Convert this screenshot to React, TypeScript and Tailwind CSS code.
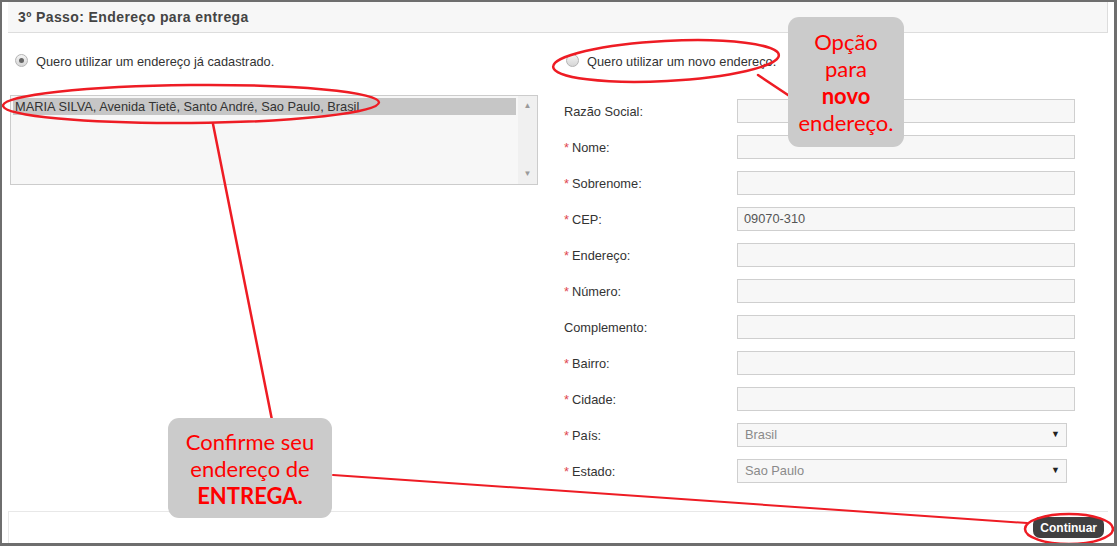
import React from 'react';

const FIELDS = [
  { label: 'Razão Social:', required: false },
  { label: 'Nome:', required: true },
  { label: 'Sobrenome:', required: true },
  { label: 'CEP:', required: true, value: '09070-310' },
  { label: 'Endereço:', required: true },
  { label: 'Número:', required: true },
  { label: 'Complemento:', required: false },
  { label: 'Bairro:', required: true },
  { label: 'Cidade:', required: true },
];

const SELECTS = [
  { label: 'País:', value: 'Brasil' },
  { label: 'Estado:', value: 'Sao Paulo' },
];

function Radio({ checked }: { checked?: boolean }) {
  return (
    <span className="mt-[1px] flex h-[13px] w-[13px] flex-shrink-0 items-center justify-center rounded-full border border-[#b4b4b4] bg-gradient-to-b from-[#f4f4f4] to-[#d6d6d6]">
      {checked && <span className="h-[5px] w-[5px] rounded-full bg-[#666]" />}
    </span>
  );
}

function Label({ text, required }: { text: string; required?: boolean }) {
  return (
    <div className="w-[173px] flex-shrink-0 pt-[2px] text-[12.8px] text-[#333]">
      {required && <span className="mr-[3px] text-[#e0464e]">*</span>}
      {text}
    </div>
  );
}

export default function App() {
  return (
    <div className="relative flex h-[546px] w-[1117px] flex-col overflow-hidden border-b-[3px] border-l-2 border-r-[3px] border-t-2 border-[#6e6e6e] bg-white font-['Liberation_Sans',Arial,sans-serif] text-[12.8px] text-[#333]">
      {/* header */}
      <div className="mx-[6px] flex h-[31px] flex-shrink-0 items-center border-b border-r border-[#dddddd] bg-[#f7f7f7] pl-[10px] text-[14px] font-bold tracking-[0.4px] text-[#444]">
        3º Passo: Endereço para entrega
      </div>

      {/* content */}
      <div className="flex flex-1">
        {/* left */}
        <div className="ml-[7px] w-[529px] flex-shrink-0 pt-[20px]">
          <div className="flex h-[18px] items-start pl-[6px]">
            <Radio checked />
            <span className="ml-[8px] leading-[18px]">Quero utilizar um endereço já cadastrado.</span>
          </div>
          <div className="ml-[1px] mt-[24px] flex h-[90px] w-[528px] border border-[#cccccc] bg-[#f7f7f7]">
            <div className="flex-1 p-[2px]">
              <div className="flex h-[17px] items-center bg-[#c6c6c6] pl-[2px] text-[12.8px] text-[#333]">
                MARIA SILVA, Avenida Tietê, Santo André, Sao Paulo, Brasil
              </div>
            </div>
            <div className="flex w-[19px] flex-col items-center justify-between bg-[#f0f0f0] py-[4px] text-[8px] text-[#9a9a9a]">
              <span>▲</span>
              <span>▼</span>
            </div>
          </div>
        </div>

        {/* right */}
        <div className="ml-[26px] flex-1 pt-[20px]">
          <div className="flex h-[18px] items-start pl-[2px]">
            <Radio />
            <span className="ml-[8px] leading-[18px]">Quero utilizar um novo endereço.</span>
          </div>
          <div className="mt-[28px] flex flex-col gap-[12px]">
            {FIELDS.map((f) => (
              <div key={f.label} className="flex h-[24px] items-center">
                <Label text={f.label} required={f.required} />
                <div className="flex h-[24px] w-[338px] items-center border border-[#cfcfcf] bg-[#f7f7f7] pl-[6px] text-[12.8px] text-[#555]">
                  {f.value}
                </div>
              </div>
            ))}
            {SELECTS.map((s) => (
              <div key={s.label} className="flex h-[24px] items-center">
                <Label text={s.label} required />
                <div className="flex h-[24px] w-[330px] items-center justify-between border border-[#cfcfcf] bg-[#f7f7f7] pl-[7px] pr-[6px] text-[12.8px] text-[#8a8a8a]">
                  <span>{s.value}</span>
                  <span className="text-[9px] text-[#222]">▼</span>
                </div>
              </div>
            ))}
          </div>
        </div>
      </div>

      {/* footer */}
      <div className="mx-[6px] flex h-[32px] flex-shrink-0 items-center justify-end border-l border-t border-[#e8e8e8] pr-[4px]">
        <button className="flex h-[21px] items-center rounded-[7px] bg-[#404040] px-[7px] text-[12px] font-bold text-white">
          Continuar
        </button>
      </div>

      {/* annotations */}
      <svg
        className="pointer-events-none absolute left-[-2px] top-[-2px] h-[546px] w-[1117px]"
        viewBox="0 0 1117 546"
      >
        <g fill="none" stroke="#ee1c24" strokeLinecap="round">
          <ellipse cx="191" cy="104" rx="188" ry="19" strokeWidth="2.5" transform="rotate(-0.5 191 104)" />
          <ellipse cx="666" cy="61" rx="113" ry="20" strokeWidth="2.5" transform="rotate(-3 666 61)" />
          <ellipse cx="1069" cy="529" rx="44" ry="15" strokeWidth="2.5" />
          <path d="M213 124 L272 420" strokeWidth="2.5" />
          <path d="M758 75 L797 101" strokeWidth="2.5" />
          <path d="M333 475 L1027 523" strokeWidth="2" />
        </g>
      </svg>

      <div className="absolute left-[786px] top-[15px] flex h-[130px] w-[116px] flex-col items-center justify-center rounded-[11px] bg-[#cbcbcb] font-['Lato',sans-serif] text-[22px] leading-[27px] text-[#ff0000]">
        <div className="h-[27px]">Opção</div>
        <div className="h-[27px]">para</div>
        <div className="h-[27px] font-bold">novo</div>
        <div className="h-[27px]">endereço.</div>
      </div>

      <div className="absolute left-[166px] top-[416px] flex h-[100px] w-[164px] flex-col items-center justify-center rounded-[11px] bg-[#cbcbcb] font-['Lato',sans-serif] text-[22px] leading-[27px] text-[#ff0000]">
        <div className="h-[27px]">Confirme seu</div>
        <div className="h-[27px]">endereço de</div>
        <div className="h-[27px] font-bold">ENTREGA.</div>
      </div>
    </div>
  );
}
